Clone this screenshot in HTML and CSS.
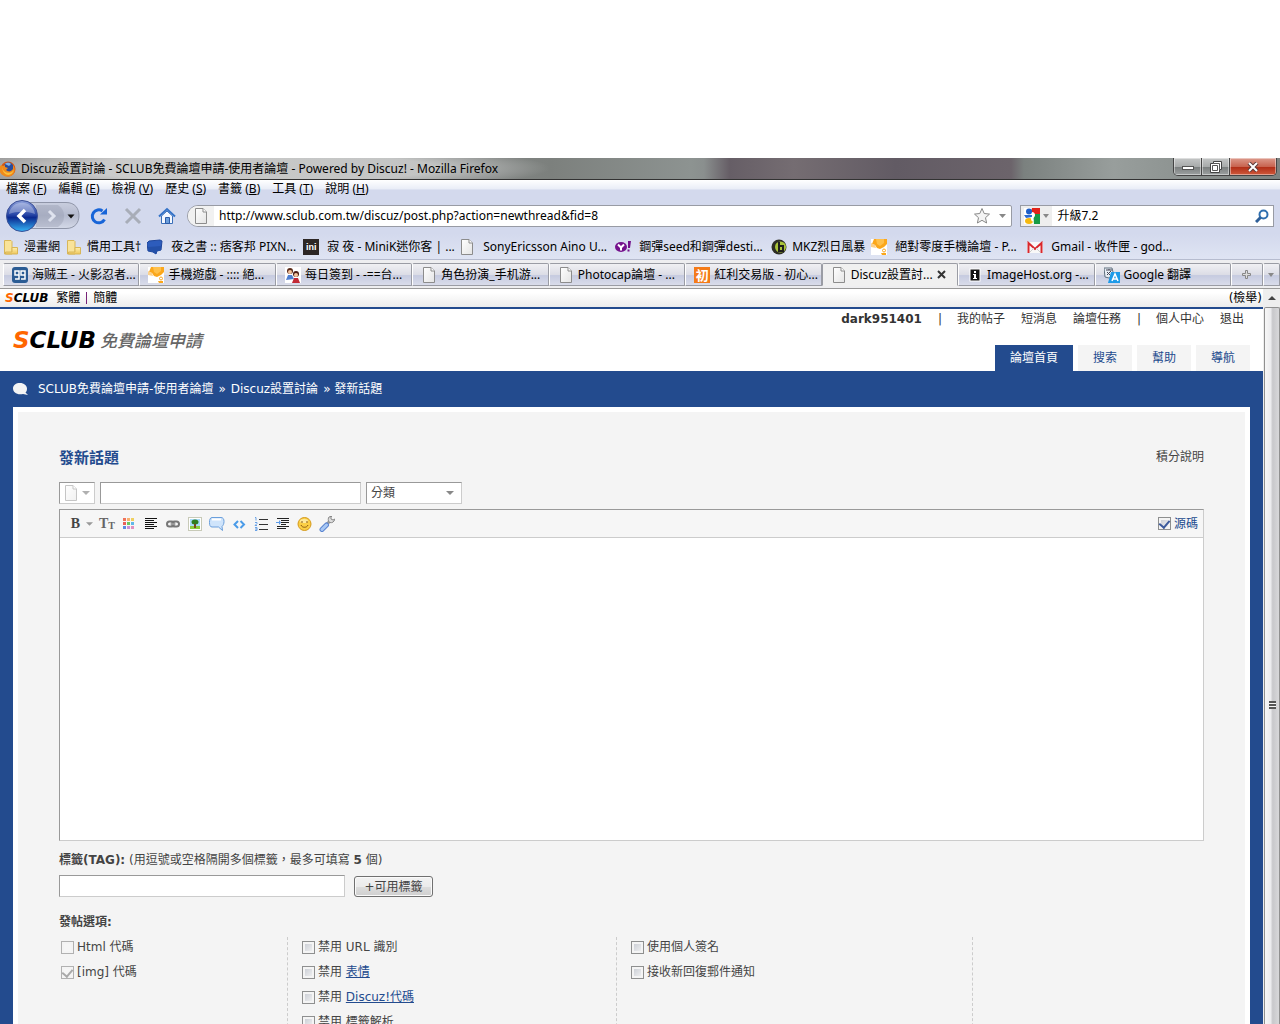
FILE: index.html
```html
<!DOCTYPE html>
<html lang="zh-Hant">
<head>
<meta charset="utf-8">
<title>Discuz設置討論 - SCLUB免費論壇申請</title>
<link rel="stylesheet" href="styles.css">
</head>
<body>
<svg class="defs" aria-hidden="true">
  <defs>
    <linearGradient id="paper" x1="0" y1="0" x2="1" y2="1"><stop offset="0" stop-color="#fff"/><stop offset="1" stop-color="#e4e4e4"/></linearGradient>
    <linearGradient id="blueball" x1="0" y1="0" x2="0" y2="1"><stop offset="0" stop-color="#8fa2dc"/><stop offset=".45" stop-color="#2a48a8"/><stop offset=".55" stop-color="#0c2a90"/><stop offset="1" stop-color="#35b4f5"/></linearGradient>
    <linearGradient id="pill" x1="0" y1="0" x2="0" y2="1"><stop offset="0" stop-color="#c9cede"/><stop offset=".5" stop-color="#b4bace"/><stop offset="1" stop-color="#d4d9e8"/></linearGradient>
    <linearGradient id="gold" x1="0" y1="0" x2="0" y2="1"><stop offset="0" stop-color="#fff0b0"/><stop offset="1" stop-color="#eec75c"/></linearGradient>
  </defs>
  <symbol id="i-doc" viewBox="0 0 16 16"><path d="M2.500.5h7.500l3.500 3.500v11.500h-11z" fill="url(#paper)" stroke="#8c8c8c"/><path d="M10 .5v3.500h3.500" fill="#fff" stroke="#8c8c8c"/></symbol>
  <symbol id="i-folder" viewBox="0 0 16 16"><path d="M1.500 1.500h6.500l1 1v12.500h-7.500z" fill="#f9e39a" stroke="#d8b658"/><path d="M9 8.500h5.500v6.500H2.500V13H9z" fill="url(#gold)" stroke="#d8b658"/></symbol>
  <symbol id="i-trophy" viewBox="0 0 16 16"><path fill="#fff" d="M0 0h16v16H0z"/><path d="M3 0h13v5l-3 3-4 2-3-1-2-3-3-1z" fill="#fba71b"/><path d="M5 0h8v4l-4 3-3-2z" fill="#ffc04a"/><path d="M0 4l4 2 1 3-5-1z" fill="#fcd08a"/><circle cx="13" cy="11.500" r="1.500" fill="#fff" stroke="#fba71b"/><path d="M10 14l5 0v2h-4z" fill="#fba71b"/></symbol>
</svg>

<div class="window">
  <header class="titlebar">
    <svg class="ico" viewBox="0 0 16 16"><circle cx="8" cy="8" r="7.500" fill="#d9560f"/><circle cx="8.500" cy="6.500" r="5" fill="#2a4d9c"/><path d="M5 3c2-2 5-1 6 0L9 5z" fill="#7fb3ea"/><path d="M1 4l2 1 2-1 0 2 3 1-2 2c2 2 5 2 7-1l0-4c3 4 2 9-2 11-5 2-12-1-12-8z" fill="#ef8a1c"/><path d="M2 6c1 6 8 8 12 3-2 7-11 7-12-3z" fill="#f9c13c"/></svg>
    <span class="titlebar-text">Discuz設置討論 - SCLUB免費論壇申請-使用者論壇 - Powered by Discuz! - Mozilla Firefox</span>
    <div class="winbtns">
      <button class="wb wb-min" aria-label="最小化"><svg width="12" height="10" viewBox="0 0 12 10"><rect x=".5" y="4.500" width="11" height="3" fill="#fff" stroke="#555"/></svg></button>
      <button class="wb wb-max" aria-label="還原"><svg width="12" height="12" viewBox="0 0 12 12"><path d="M3.500.5h8v8h-2v3h-9v-9h3z" fill="#fff" stroke="#444"/><path d="M2.500 4.500h5v5h-5zM3.500 2.500h6v6" fill="none" stroke="#555"/></svg></button>
      <button class="wb wb-close" aria-label="關閉"><svg width="12" height="10" viewBox="0 0 12 10"><path d="M2 1l8 8M10 1l-8 8" stroke="#5b3a3a" stroke-width="4"/><path d="M2 1l8 8M10 1l-8 8" stroke="#fff" stroke-width="2"/></svg></button>
    </div>
  </header>

  <nav class="menubar">
    <a href="#">檔案 (<u>F</u>)</a><a href="#">編輯 (<u>E</u>)</a><a href="#">檢視 (<u>V</u>)</a><a href="#">歷史 (<u>S</u>)</a><a href="#">書籤 (<u>B</u>)</a><a href="#">工具 (<u>T</u>)</a><a href="#">說明 (<u>H</u>)</a>
  </nav>

  <div class="navbar">
    <button class="plain" aria-label="上一頁 / 下一頁"><svg width="76" height="32" viewBox="0 0 76 32"><path d="M16 2.500h44c9 0 13 6 13 13s-4 13-13 13H16z" fill="url(#pill)" stroke="#8f95a8"/><path d="M30 5h22c4 3 6 6 6 11s-2 8-6 11H30z" fill="#8f95a8" opacity=".35"/><circle cx="16" cy="16" r="15.500" fill="url(#blueball)" stroke="#3a4f96"/><path d="M3 14c2-15 24-15 26 0-8-3-18-3-26 0z" fill="#fff" opacity=".3"/><path d="M19 10l-6 6 6 6" fill="none" stroke="#fff" stroke-width="3.500"/><path d="M43 11l5 5-5 5" fill="none" stroke="#dfe3ef" stroke-width="3"/><path d="M61.500 14.500h7l-3.500 4z" fill="#111"/></svg></button>
    <div class="navbtns">
      <button class="plain" aria-label="重新載入"><svg width="18" height="18" viewBox="0 0 18 18"><path d="M14.500 12.500A6.500 6.500 0 1 1 12.500 4" fill="none" stroke="#1765d8" stroke-width="3"/><path d="M10 7.500h7V1z" fill="#1765d8"/></svg></button>
      <button class="plain" aria-label="停止"><svg width="18" height="18" viewBox="0 0 18 18"><path d="M2 2l14 14M16 2L2 16" stroke="#a8adb8" stroke-width="3"/></svg></button>
      <button class="plain" aria-label="首頁"><svg width="18" height="18" viewBox="0 0 18 18"><path d="M3.500 9v7.500h11V9L9 4z" fill="#f4f8ff" stroke="#3a6fb8"/><path d="M1 9.500L9 2l8 7.500" fill="none" stroke="#3473c8" stroke-width="2"/><path d="M7.500 10.500h4v6h-4z" fill="#6c9fdc" stroke="#2d5ca8"/></svg></button>
    </div>
    <div class="urlbox">
      <span class="urlbox-id"><svg class="ico" viewBox="0 0 16 16"><use href="#i-doc"/></svg></span>
      <input type="text" aria-label="網址" value="http://www.sclub.com.tw/discuz/post.php?action=newthread&amp;fid=8">
      <svg width="18" height="18" viewBox="0 0 18 18"><path d="M9 1.500l2.200 5 5.300.6-4 3.600 1.100 5.300L9 13.300 4.400 16l1.100-5.300-4-3.600 5.300-.6z" fill="#f4f4f4" stroke="#888"/></svg>
      <svg width="7" height="4" viewBox="0 0 7 4"><path d="M0 0h7L3.500 4z" fill="#888"/></svg>
    </div>
    <div class="searchbox">
      <span class="searchbox-id">
        <svg class="ico" viewBox="0 0 16 16"><path fill="#fff" d="M0 0h16v16H0z"/><path d="M8 0h8v6H9L7 3z" fill="#e2231a"/><path d="M9 6h7v10h-6z" fill="#169b46"/><circle cx="5" cy="3.500" r="3" fill="#1e5fc8"/><path d="M0 7h8v2L2 10z" fill="#2b6bd2"/><ellipse cx="5" cy="13" rx="4" ry="3" fill="#f5b80e"/><path d="M8 5c2 0 3 2 1 4s-1 3 0 4" fill="none" stroke="#fff" stroke-width="2"/></svg>
        <svg width="6" height="4" viewBox="0 0 6 4"><path d="M0 0h6L3 4z" fill="#888"/></svg>
      </span>
      <input type="text" aria-label="搜尋" value="升級7.2">
      <svg width="14" height="14" viewBox="0 0 14 14"><circle cx="8.500" cy="5.500" r="4" fill="#fff" stroke="#2f6fb0" stroke-width="2"/><path d="M5.500 8.500L1 13" stroke="#2f5f98" stroke-width="3"/></svg>
    </div>
  </div>

  <nav class="bookmarks">
    <a class="bm" href="#"><svg class="ico" viewBox="0 0 16 16"><use href="#i-folder"/></svg>漫畫網</a>
    <a class="bm" href="#"><svg class="ico" viewBox="0 0 16 16"><use href="#i-folder"/></svg>慣用工具†</a>
    <a class="bm bm-wide" href="#"><svg class="ico" viewBox="0 0 16 16"><path d="M2 2l11-1 2 1-1 9-4 1-1 3-3-2-5-1-1-8z" fill="#2d5cbc" stroke="#1f469c"/><path d="M1 8l13-1v4l-4 1-1 3-3-2-4-1z" fill="#2450a8"/></svg>夜之書 :: 痞客邦 PIXN...</a>
    <a class="bm bm-wide" href="#"><span class="ico ico-ini">ini</span>寂 夜 - MiniK迷你客 | ...</a>
    <a class="bm bm-wide" href="#"><svg class="ico" viewBox="0 0 16 16"><use href="#i-doc"/></svg>SonyEricsson Aino U...</a>
    <a class="bm bm-wide" href="#"><svg class="ico" viewBox="0 0 16 16"><ellipse cx="6" cy="8" rx="6" ry="5" fill="#74118c"/><path d="M3 5.500l3 3 3-3M6 8.500v3" stroke="#fff" stroke-width="2" fill="none"/><path d="M13 2h3l-1 7h-2zM12.500 10.500h2v2h-2z" fill="#74118c"/></svg>鋼彈seed和鋼彈desti...</a>
    <a class="bm" href="#"><svg class="ico" viewBox="0 0 16 16"><circle cx="8" cy="8" r="7.500" fill="#2e2e26"/><circle cx="9.500" cy="8" r="5.500" fill="#a9c43a"/><path d="M8 3v9h4V7H8" fill="none" stroke="#20201c" stroke-width="2"/></svg>MKZ烈日風暴</a>
    <a class="bm bm-wide" href="#"><svg class="ico" viewBox="0 0 16 16"><use href="#i-trophy"/></svg>絕對零度手機論壇 - P...</a>
    <a class="bm bm-wide" href="#"><svg class="ico" viewBox="0 0 16 16"><path fill="#f8f8f8" d="M0 3h16v11H0z"/><path d="M1.500 14V4L8 10l6.500-6v10" fill="none" stroke="#d8272c" stroke-width="2"/><path d="M3 13l4-4M13 13L9 9" stroke="#ccc"/></svg>Gmail - 收件匣 - god...</a>
  </nav>

  <div class="tabs">
    <a class="tab" href="#"><svg class="ico" viewBox="0 0 16 16"><rect width="16" height="16" rx="3" fill="#2b5c94"/><g fill="none" stroke="#fff" stroke-width="1.500"><path d="M7 8H3V4h4v8H3M13 8H9V4h4v8H9"/></g></svg>海贼王 - 火影忍者...</a>
    <a class="tab" href="#"><svg class="ico" viewBox="0 0 16 16"><use href="#i-trophy"/></svg>手機遊戲 - :::: 絕...</a>
    <a class="tab" href="#"><svg class="ico" viewBox="0 0 16 16"><path fill="#fff" d="M0 0h16v16H0z"/><circle cx="5" cy="4" r="3" fill="#5a2a18"/><circle cx="5" cy="5" r="2" fill="#f5c59d"/><path d="M1 13l2-5h4l2 4z" fill="#4f7fd0"/><circle cx="11" cy="7" r="3" fill="#4a1c14"/><circle cx="11" cy="8" r="2" fill="#f5c59d"/><path d="M7 16l2-5h4l2 5z" fill="#c22a35"/></svg>每日簽到 - -==台...</a>
    <a class="tab" href="#"><svg class="ico" viewBox="0 0 16 16"><use href="#i-doc"/></svg>角色扮演_手机游...</a>
    <a class="tab" href="#"><svg class="ico" viewBox="0 0 16 16"><use href="#i-doc"/></svg>Photocap論壇 - ...</a>
    <a class="tab" href="#"><span class="ico ico-chu">初</span>紅利交易版 - 初心...</a>
    <a class="tab tab-on" href="#"><svg class="ico" viewBox="0 0 16 16"><use href="#i-doc"/></svg>Discuz設置討...<svg width="9" height="9" viewBox="0 0 9 9"><path d="M1 1l7 7M8 1L1 8" stroke="#333" stroke-width="2"/></svg></a>
    <a class="tab" href="#"><svg class="ico" viewBox="0 0 16 16"><rect x="3" y="2" width="10" height="12" fill="#111" stroke="#fff"/><path d="M7 4h2v2H7zM6 7h3v4h1v1H6v-1h1V8H6z" fill="#fff"/></svg>ImageHost.org -...</a>
    <a class="tab" href="#"><svg class="ico" viewBox="0 0 16 16"><path d="M0 1h8l2 8-5 2-4-1z" fill="#e8eef4" stroke="#60707e"/><path d="M2 3h6M5 2v1M3 8l4-4M3 5l4 4" stroke="#445" fill="none"/><path d="M7 5h9v11H4z" fill="#1e9be8"/><path d="M8 14l3-7 3 7M9 12h4" fill="none" stroke="#fff" stroke-width="1.500"/></svg>Google 翻譯</a>
    <button class="tab-new" aria-label="新分頁"><svg width="9" height="9" viewBox="0 0 9 9"><path d="M3.500.5h2v3h3v2h-3v3h-2v-3h-3v-2h3z" fill="#ddd" stroke="#888"/></svg></button>
    <button class="tab-list" aria-label="分頁清單"><svg width="6" height="4" viewBox="0 0 6 4"><path d="M0 0h6L3 4z" fill="#888"/></svg></button>
  </div>

  <div class="viewport">
    <main class="page">
      <div class="topbar">
        <a class="logo logo-small" href="#"><b>S</b>CLUB</a>
        <a href="#">繁體</a><span class="vbar"></span><a href="#">簡體</a>
        <a class="report" href="#">(檢舉)</a>
      </div>

      <div class="head">
        <a class="brand" href="#"><span class="logo"><b>S</b>CLUB</span><em>免費論壇申請</em></a>
        <div class="head-right">
          <div class="userlinks">
            <a class="user" href="#">dark951401</a><span>|</span><a href="#">我的帖子</a><a href="#">短消息</a><a href="#">論壇任務</a><span>|</span><a href="#">個人中心</a><a href="#">退出</a>
          </div>
          <nav class="mainnav">
            <a class="on" href="#">論壇首頁</a><a href="#">搜索</a><a href="#">幫助</a><a href="#">導航</a>
          </nav>
        </div>
      </div>

      <div class="body">
        <div class="crumbs">
          <svg width="16" height="13" viewBox="0 0 16 13"><path d="M7 0c4 0 7 2.500 7 5.500 0 2-.5 3-1.500 4L15 12l-5-1c-6 1.500-10-2-10-5.500S3 0 7 0z" fill="#f4f4f4"/></svg>
          <a href="#">SCLUB免費論壇申請-使用者論壇</a> » <a href="#">Discuz設置討論</a> » 發新話題
        </div>

        <form class="panel">
          <div class="panel-head"><h1>發新話題</h1><a href="#">積分說明</a></div>

          <div class="subject">
            <button type="button" class="iconpick" aria-label="圖標"><svg class="ico faded" viewBox="0 0 16 16"><use href="#i-doc"/></svg><svg width="8" height="4" viewBox="0 0 8 4"><path d="M0 0h8L4 4z" fill="#b0b0b0"/></svg></button>
            <input class="field field-subject" type="text" aria-label="標題">
            <select class="field field-type" aria-label="分類"><option>分類</option></select>
          </div>

          <div class="editor">
            <div class="toolbar">
              <button type="button" class="tool tool-bold" aria-label="粗體">B<svg width="7" height="4" viewBox="0 0 8 4"><path d="M0 0h8L4 4z" fill="#999"/></svg></button>
              <button type="button" class="tool tool-size" aria-label="字號">T<small>T</small></button>
              <button type="button" class="tool" aria-label="顏色"><svg class="ico" viewBox="0 0 16 16"><path d="M2 2h3v3H2z" fill="#f0725a"/><path d="M6 2h3v3H6z" fill="#f8b070"/><path d="M10 2h3v3h-3z" fill="#f0d060"/><path d="M2 6h3v3H2z" fill="#e8605a"/><path d="M6 6h3v3H6z" fill="#68c860"/><path d="M10 6h3v3h-3z" fill="#60b8e8"/><path d="M2 10h3v3H2z" fill="#5a8ae0"/><path d="M6 10h3v3H6z" fill="#c890d8"/><path d="M10 10h3v3h-3z" fill="#e090c0"/></svg></button>
              <button type="button" class="tool" aria-label="對齊"><svg class="ico" viewBox="0 0 16 16"><path d="M2 2.500h12M2 4.500h9M2 6.500h12M2 8.500h9M2 10.500h12M2 12.500h9" stroke="#111"/></svg></button>
              <button type="button" class="tool" aria-label="鏈接"><svg class="ico" viewBox="0 0 16 16"><g fill="none" stroke="#777" stroke-width="2"><rect x="2" y="5.500" width="7" height="5" rx="2.500"/><rect x="7" y="5.500" width="7" height="5" rx="2.500"/></g><path d="M5 8h6" stroke="#bbb" stroke-width="1"/></svg></button>
              <button type="button" class="tool" aria-label="圖片"><svg class="ico" viewBox="0 0 16 16"><rect x="1.500" y="1.500" width="13" height="13" fill="#fff" stroke="#c8cab8"/><path d="M3 3h10v8H3z" fill="#a8dcf8"/><path d="M3 10h10v3H3z" fill="#8ccc3c"/><ellipse cx="8" cy="6" rx="3.500" ry="2.500" fill="#2f7d1e"/><path d="M7 8h2v4H7z" fill="#7a4a20"/></svg></button>
              <button type="button" class="tool" aria-label="引用"><svg class="ico" viewBox="0 0 16 16"><path d="M3 1.500h9c2 0 3 1.500 3 4s-1 4-2 5l.5 4-4-3.500H3c-2 0-2.500-2-2.500-4.500S1 1.500 3 1.500z" fill="#cfe4fb" stroke="#6a9fdc"/><path d="M3 3.500h9" stroke="#fff" stroke-width="2"/></svg></button>
              <button type="button" class="tool" aria-label="代碼"><svg class="ico" viewBox="0 0 16 16"><path d="M7 5L3.500 8.500 7 12M9.500 5L13 8.500 9.500 12" fill="none" stroke="#4a9be8" stroke-width="2"/></svg></button>
              <button type="button" class="tool" aria-label="列表"><svg class="ico" viewBox="0 0 16 16"><path d="M6 3.500h9M6 8.500h9M6 13.500h9" stroke="#333"/><path d="M2 1.500h1v3M2 6.500h2v1l-2 2h2M2 11.500h2v3H2M2 13h2" fill="none" stroke="#6aa2e6"/></svg></button>
              <button type="button" class="tool" aria-label="縮進"><svg class="ico" viewBox="0 0 16 16"><path d="M2 2.500h12M6 4.500h8M6 6.500h8M6 8.500h5M2 10.500h12M2 12.500h9" stroke="#222"/><path d="M1 6h3V4l2 2.500L4 9V7H1z" fill="#5b9be8"/></svg></button>
              <button type="button" class="tool" aria-label="表情"><svg class="ico" viewBox="0 0 16 16"><circle cx="7.500" cy="8" r="6.500" fill="#fbcf45" stroke="#d59a1c"/><ellipse cx="7" cy="5" rx="4" ry="2" fill="#fdeaa0"/><path d="M5 5v2M10 5v2M4 9c1 3 6 3 7 0" fill="none" stroke="#8a5a10"/></svg></button>
              <button type="button" class="tool" aria-label="工具"><svg class="ico" viewBox="0 0 16 16"><path d="M7 9L11 5" stroke="#999" stroke-width="3"/><path d="M10 1c-1 1-1 4 0 5s4 1 5-1l1-2-2 1-2-1 0-2 1-1z" fill="#ddd" stroke="#888"/><path d="M3 13.500L7.500 9" stroke="#5a84d0" stroke-width="5" stroke-linecap="round"/><path d="M3 13.500L7.500 9" stroke="#a8c8f4" stroke-width="3" stroke-linecap="round"/></svg></button>
              <label class="source"><input type="checkbox" class="tick" checked>源碼</label>
            </div>
            <textarea aria-label="內容"></textarea>
          </div>

          <label class="line" for="tags"><b>標籤(TAG):</b> (用逗號或空格隔開多個標籤，最多可填寫 <b>5</b> 個)</label>
          <div class="tagrow">
            <input class="field field-tags" id="tags" type="text">
            <button type="button" class="btn">+可用標籤</button>
          </div>

          <h2 class="line">發帖選項:</h2>
          <div class="options">
            <ul>
              <li><label><input type="checkbox" class="tick" disabled>Html 代碼</label></li>
              <li><label><input type="checkbox" class="tick" checked disabled>[img] 代碼</label></li>
            </ul>
            <ul>
              <li><label><input type="checkbox" class="tick">禁用 URL 識別</label></li>
              <li><label><input type="checkbox" class="tick"><span>禁用 <a href="#">表情</a></span></label></li>
              <li><label><input type="checkbox" class="tick"><span>禁用 <a href="#">Discuz!代碼</a></span></label></li>
              <li><label><input type="checkbox" class="tick">禁用 標籤解析</label></li>
            </ul>
            <ul>
              <li><label><input type="checkbox" class="tick">使用個人簽名</label></li>
              <li><label><input type="checkbox" class="tick">接收新回復郵件通知</label></li>
            </ul>
            <ul></ul>
          </div>
        </form>
      </div>
    </main>

    <div class="scrollbar" aria-hidden="true">
      <div class="scroll-up"><svg width="8" height="4" viewBox="0 0 8 4"><path d="M4 0l4 4H0z" fill="#444"/></svg></div>
      <div class="scroll-thumb"><span class="grip"></span></div>
    </div>
  </div>
</div>
</body>
</html>
```
FILE: styles.css
```css
* { box-sizing: border-box; }

body {
  margin: 0;
  background: #fff;
  color: #444;
  font: 12px/18px "DejaVu Sans", "Noto Sans CJK TC", sans-serif;
}

a { color: inherit; text-decoration: none; }
button, input, select, textarea { font: inherit; color: inherit; margin: 0; padding: 0; border: 0; }
button { background: none; }
svg { flex: none; display: block; }
.defs { position: absolute; width: 0; height: 0; }
.ico { width: 16px; height: 16px; flex: none; }
.plain { flex: none; }

.window {
  display: flex;
  flex-direction: column;
  height: 100vh;
  padding-top: 158px;
  overflow: hidden;
}
.titlebar, .menubar, .navbar, .bookmarks, .tabs {
  flex: none;
  display: flex;
  align-items: center;
  color: #000;
  font-family: "Noto Sans", "Noto Sans CJK TC", sans-serif;
  white-space: nowrap;
}

/* Title bar */
.titlebar {
  height: 22px;
  gap: 5px;
  border-bottom: 1px solid #333;
  background:
    radial-gradient(ellipse 290px 24px at 260px 10px, #ffffff80 60%, #fff0),
    linear-gradient(90deg, #9c9c9c 0, #858887 36%, #7c807d 43%, #8d9391 54%, #8a8f8e 55%, #665e66 57%, #756d72 62%, #625b64 70%, #6c646b 79%, #7b817f 80%, #989e9c 87%, #7d8381 100%);
}
.titlebar-text { flex: 1; }
.winbtns {
  display: flex;
  align-self: flex-start;
  height: 18px;
  margin-right: 3px;
  border: 1px solid #444;
  border-top: 0;
  border-radius: 0 0 5px 5px;
  overflow: hidden;
}
.wb {
  display: flex;
  align-items: center;
  justify-content: center;
  width: 28px;
  background: linear-gradient(#c4c6c6, #a8abab 50%, #797d7d 52%, #9da1a1);
  box-shadow: inset 0 0 0 1px #ffffff70;
  border-right: 1px solid #444;
}
.wb-close { width: 46px; border-right: 0; background: linear-gradient(#dc9a8c, #c86450 50%, #b02c16 52%, #cf5a3c); }

/* Menu, address and bookmark bars */
.menubar { height: 18px; padding-left: 6px; gap: 12px; background: linear-gradient(#fff, #e9edf7 50%, #d3d9ed 55%); }
.navbar { height: 36px; padding: 0 6px; gap: 8px; background: #d3d9ed; }
.navbtns { display: flex; gap: 16px; margin-right: 3px; }
.urlbox, .searchbox {
  display: flex;
  align-items: center;
  height: 22px;
  background: #fff;
  border: 1px solid #989ba4;
  gap: 5px;
}
.urlbox { flex: 1; padding-right: 5px; border-radius: 11px 2px 2px 11px; gap: 8px; }
.urlbox-id { display: flex; align-items: center; align-self: stretch; width: 26px; padding-left: 5px; background: #f1f1f1; border-radius: 11px 0 0 11px; }
.urlbox input { flex: 1; min-width: 0; margin-left: -3px; background: none; }
.searchbox { flex: none; width: 20%; padding-right: 4px; }
.searchbox-id { display: flex; align-items: center; align-self: stretch; gap: 3px; padding: 0 3px; background: #eee; }
.searchbox input { flex: 1; min-width: 0; background: none; }

.bookmarks {
  height: 26px;
  padding-left: 3px;
  background: linear-gradient(#d3d9ed, #dfe4f3);
  border-bottom: 1px solid #b6bccf;
}
.bm { display: flex; align-items: center; gap: 5px; padding-right: 6px; }
.bm-wide { width: 156px; gap: 8px; padding-right: 0; }
.ico-ini { background: #2d2725; color: #fff; font: bold 9px/16px "Liberation Sans", sans-serif; text-align: center; }
.ico-chu { background: #f47b18; color: #fff; font: bold 13px/16px "Noto Sans CJK TC", sans-serif; text-align: center; }

/* Tab strip */
.tabs {
  height: 29px;
  padding: 3px 0 2px 3px;
  align-items: stretch;
  background: #eeeef0;
  border-bottom: 1px solid #999;
}
.tab, .tab-new, .tab-list {
  display: flex;
  align-items: center;
  border: 1px solid #9a9ca4;
  border-left-color: #fff;
  border-radius: 2px 2px 0 0;
  background: linear-gradient(#f0f0f3, #dcdde6 50%, #c6cbe0 55%, #d9dcea);
}
.tab { flex: 1 1 0; min-width: 0; gap: 4px; padding-left: 8px; overflow: hidden; }
.tab-on { background: #f0f0f0; border-bottom-color: #f0f0f0; border-left-color: #9a9ca4; }
.tab-new, .tab-list { flex: none; width: 32px; justify-content: center; }
.tab-list { width: 17px; }

/* Page area */
.viewport { flex: 1; display: flex; min-height: 0; }
.page { flex: 1; min-width: 0; display: flex; flex-direction: column; overflow: hidden; }

.scrollbar { flex: none; display: flex; flex-direction: column; width: 17px; padding-left: 1px; background: #eee; }
.scroll-up { display: flex; align-items: center; justify-content: center; height: 18px; }
.scroll-thumb {
  flex: 1;
  display: flex;
  flex-direction: column;
  align-items: center;
  border: 1px solid #909090;
  border-bottom: 0;
  border-radius: 2px 2px 0 0;
  background: linear-gradient(90deg, #f7f7f7 0, #ececee 40%, #c8c8cb 55%, #d8d8da 100%);
}
.scroll-thumb::before { content: ""; flex: 5; }
.scroll-thumb::after { content: ""; flex: 4; }
.grip { width: 7px; height: 8px; background: repeating-linear-gradient(#555 0 2px, #f5f5f5 2px 3px); }

.topbar {
  flex: none;
  display: flex;
  align-items: center;
  height: 20px;
  padding: 0 1px 0 5px;
  color: #000;
  background: linear-gradient(#fff 20%, #ececec);
  border-bottom: 2px solid #234b8e;
}
.vbar { width: 1px; height: 12px; margin: 0 6px; background: #727; }
.report { margin-left: auto; }

.logo { color: #000; font: italic bold 23px/24px "DejaVu Sans", sans-serif; }
.logo b { color: #f60; }
.logo-small { font-size: 12px; line-height: 18px; margin-right: 8px; }

.head { flex: none; display: flex; justify-content: space-between; height: 62px; padding-left: 13px; background: #fff; }
.brand { display: flex; align-items: center; gap: 4px; }
.brand em { color: #666; font: italic 500 17px/24px "Noto Sans CJK TC", sans-serif; }
.head-right { display: flex; flex-direction: column; justify-content: space-between; color: #333; }
.userlinks { display: flex; justify-content: flex-end; gap: 16px; padding-right: 19px; line-height: 20px; }
.userlinks span { width: 3px; }
.user { font-weight: bold; }
.mainnav { display: flex; justify-content: flex-end; gap: 5px; padding-right: 13px; }
.mainnav a { padding: 0 15px; line-height: 26px; background: #f4f4f4; color: #234b8e; }
.mainnav .on { background: #234b8e; color: #fff; }

.body { flex: 1 0 auto; padding: 0 13px; background: #234b8e; }
.crumbs { display: flex; align-items: center; gap: 5px; height: 36px; color: #fff; }
.crumbs svg { margin-right: 4px; }

.panel { padding: 36px 41px; background: #f4f4f4; border: 5px solid #fff; min-height: 700px; }
.panel-head { display: flex; justify-content: space-between; margin-bottom: 14px; }
h1 { margin: 0; color: #234b8e; font-size: 15px; line-height: 20px; }

.field, .iconpick, .editor { background: #fff; border: 1px solid; border-color: #999 #ccc #ccc #999; }
.field, .iconpick { height: 22px; }
.subject { display: flex; gap: 5px; margin-bottom: 5px; }
.iconpick { display: flex; align-items: center; gap: 3px; width: 36px; padding-left: 3px; }
.faded { opacity: .5; }
.field-subject { width: 261px; padding: 0 3px; }
.field-type {
  width: 96px;
  padding-left: 4px;
  appearance: none;
  background: #fff url("data:image/svg+xml,%3Csvg xmlns='http://www.w3.org/2000/svg' width='8' height='4'%3E%3Cpath d='M0 0h8L4 4z' fill='%23888'/%3E%3C/svg%3E") no-repeat right 7px center;
}

.toolbar { display: flex; align-items: center; gap: 6px; height: 28px; padding: 0 5px 0 7px; background: #f6f6f6; border-bottom: 1px solid #ccc; }
.tool { display: flex; align-items: center; justify-content: center; width: 16px; height: 20px; }
.tool-bold, .tool-size { font: bold 14px/20px "Liberation Serif", serif; }
.tool-bold { width: 26px; gap: 6px; justify-content: flex-end; }
.tool-size { color: #666; }
.tool-size small { font-size: 10px; line-height: 16px; align-self: flex-end; }
.source { display: flex; align-items: center; gap: 3px; margin-left: auto; color: #234b8e; }
textarea { display: block; width: 100%; height: 302px; resize: none; background: #fff; }

.line { display: block; margin: 10px 0 6px; font-size: 12px; line-height: 18px; }
h2.line { margin-top: 16px; }
.tagrow { display: flex; gap: 9px; }
.field-tags { width: 286px; padding: 0 3px; }
.btn { width: 79px; height: 21px; margin-top: 1px; border: 1px solid #707070; border-radius: 3px; background: linear-gradient(#f2f2f2, #ebebeb 50%, #dddddd 52%, #cfcfcf); box-shadow: inset 0 0 0 1px #fafafa; }

.options { display: grid; grid-template-columns: 229fr 329fr 356fr 231fr; min-height: 140px; }
.options ul { display: flex; flex-direction: column; gap: 5px; margin: 0; padding: 0 0 0 14px; list-style: none; border-right: 1px dashed #ccc; }
.options ul:first-child { padding-left: 2px; }
.options ul:last-child { border: 0; }
.options label { display: flex; align-items: center; gap: 3px; height: 20px; white-space: pre; }
.options a { color: #234b8e; text-decoration: underline; }

.tick {
  appearance: none;
  flex: none;
  width: 13px;
  height: 13px;
  border: 1px solid #8e8f8f;
  background: linear-gradient(135deg, #c4c8d0, #f6f6f6);
  box-shadow: inset 0 0 0 2px #f4f4f4;
}
.tick:checked::before { content: ""; display: block; width: 5px; height: 8px; margin: 0 auto; border: solid #3c5a9c; border-width: 0 2px 2px 0; transform: rotate(40deg); }
.tick:disabled { border-color: #b1b1b1; background: #f6f6f6; }
.tick:disabled:checked::before { border-color: #aaa; }
```
